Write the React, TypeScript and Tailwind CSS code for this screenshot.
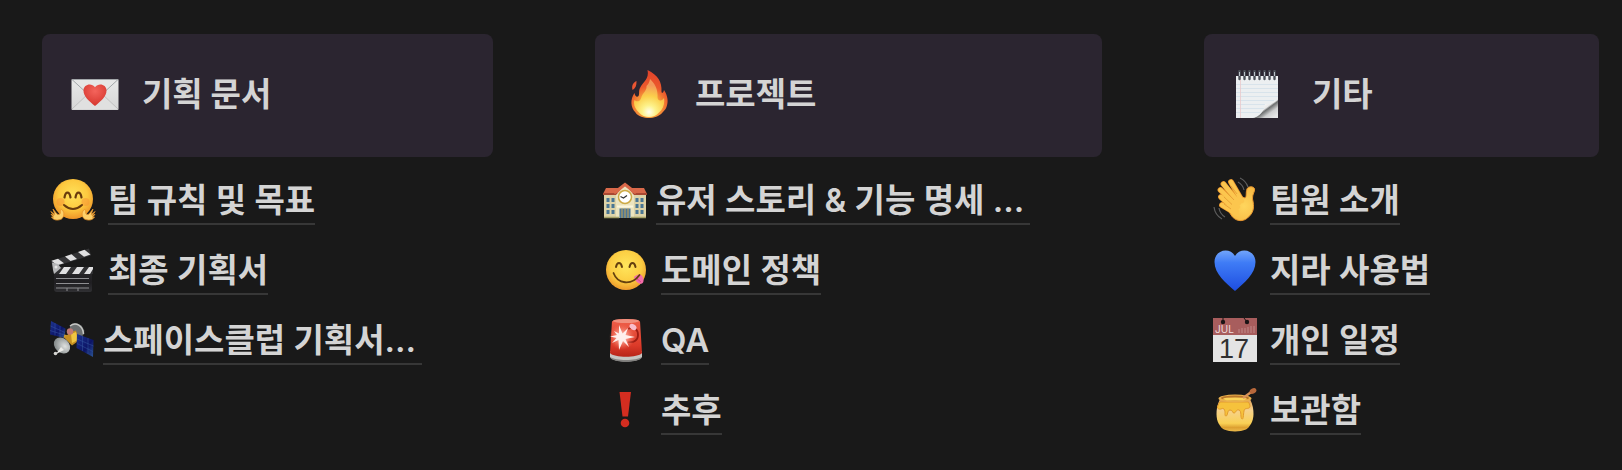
import type { ReactNode } from "react";

type IconProps = { className?: string };
type Item = { label: string; Icon: (p: IconProps) => ReactNode; wide?: boolean };
type Section = {
  title: string;
  Icon: (p: IconProps) => ReactNode;
  indent?: boolean;
  items: Item[];
};

function LoveLetter({ className }: IconProps) {
  return (
    <svg viewBox="0 0 48 48" className={className} aria-hidden="true">
      <defs>
        <linearGradient id="paper" x1="0" y1="0" x2="0" y2="1">
          <stop offset="0" stopColor="#e9e9e9" />
          <stop offset="1" stopColor="#d6d6d6" />
        </linearGradient>
        <radialGradient id="redHeart" cx=".5" cy=".3" r=".7">
          <stop offset="0" stopColor="#f4645c" />
          <stop offset="1" stopColor="#d5352d" />
        </radialGradient>
      </defs>
      <rect x="0.5" y="9" width="47" height="31" rx="1" fill="url(#paper)" />
      <path d="M1 39 18 23h12l17 16" fill="#e0e0e0" stroke="#bdbdbd" strokeWidth=".9" />
      <path d="M1 9.500 20 27q4 3.500 8 0L47 9.500z" fill="#e6e6e6" stroke="#a3a7aa" strokeWidth="1" />
      <path
        d="M24 36C18 31 12.500 26.500 12.500 20.500c0-6 8-8 11.500-3.200 3.500-4.800 11.500-2.800 11.500 3.200C35.500 26.500 30 31 24 36z"
        fill="url(#redHeart)"
      />
    </svg>
  );
}

function Fire({ className }: IconProps) {
  return (
    <svg viewBox="-1 0 48 48" className={className} aria-hidden="true">
      <defs>
        <radialGradient id="flame" gradientUnits="userSpaceOnUse" cx="24" cy="36" r="33">
          <stop offset="0" stopColor="#fbc04a" />
          <stop offset=".35" stopColor="#f59a3a" />
          <stop offset=".6" stopColor="#ec5a2c" />
          <stop offset="1" stopColor="#e2452b" />
        </radialGradient>
        <radialGradient id="flameCore" gradientUnits="userSpaceOnUse" cx="24" cy="42" r="27">
          <stop offset="0" stopColor="#fffef0" />
          <stop offset=".25" stopColor="#fdf28a" />
          <stop offset=".6" stopColor="#fbcf4b" />
          <stop offset="1" stopColor="#f3995a" />
        </radialGradient>
      </defs>
      <path
        d="M22.500 0C33 5 37 12 36.500 21.500c0 2 1.800 2 2.500-1.500 4 6 4.500 12 2.500 17-1 3-3 4-4 5.500C34 46.500 29 48 24 48s-11-1.500-13.500-5.500c-5-5-5.500-13-1-19.500C10 26 12 28 13.500 26c1.500-2.500-.5-5 2-9C18 12 24.500 9 22.500 0z"
        fill="url(#flame)"
      />
      <path
        d="M25 9c5 5 8 10 7.500 18 0 4 3.500 5 6.500 1 1 6-1 11-5 14.500-5 6-15 6-20 0-4-4-6-8-4.500-12.500 2 2 5 2 6.500-1.500C18 22 22 21 21.500 16c2-2 3-4 3.500-7z"
        fill="url(#flameCore)"
      />
      <path d="M11.500 11C7.500 13 6.500 16 7.500 20c3-2 4-4 4-9z" fill="#ea5632" />
    </svg>
  );
}

function Notepad({ className }: IconProps) {
  return (
    <svg viewBox="0 0 48 48" className={className} aria-hidden="true">
      <defs>
        <linearGradient id="curl" x1="0" y1="0" x2="1" y2="1">
          <stop offset=".3" stopColor="#ffffff" />
          <stop offset=".5" stopColor="#e8e8e8" />
          <stop offset=".56" stopColor="#6d6f70" />
          <stop offset=".72" stopColor="#cfd0d1" />
          <stop offset=".9" stopColor="#e6e7e8" />
        </linearGradient>
      </defs>
      <rect x="3" y="6" width="42" height="42" fill="#eceff1" />
      <path d="M3 14.500h42M3 18.500h42M3 22.500h42M3 26.500h42M3 30.500h38M3 34.500h30M3 38.500h28M3 42.500h24" stroke="#d3e0ea" strokeWidth=".8" />
      <path d="M7.500 6v42" stroke="#eac9cb" strokeWidth=".8" />
      <path d="M45 29v19H19c8-1 12-7 13-14 5 1 10-1 13-5z" fill="url(#curl)" />
      <path
        d="M6.500 1v8M11.500 1v8M16.500 1v8M21.500 1v8M26.500 1v8M31.500 1v8M36.500 1v8M41.500 1v8"
        stroke="#4b5058"
        strokeWidth="2.400"
        strokeLinecap="round"
      />
      <path
        d="M6.500 2v4M11.500 2v4M16.500 2v4M21.500 2v4M26.500 2v4M31.500 2v4M36.500 2v4M41.500 2v4"
        stroke="#b9c0c7"
        strokeWidth="1"
      />
    </svg>
  );
}

function HuggingFace({ className }: IconProps) {
  return (
    <svg viewBox="0 0 46 46" className={className} aria-hidden="true">
      <defs>
        <radialGradient id="hugFace" cx=".5" cy=".4" r=".6">
          <stop offset="0" stopColor="#ffe25a" />
          <stop offset=".6" stopColor="#fdc93f" />
          <stop offset="1" stopColor="#ee9428" />
        </radialGradient>
      </defs>
      <circle cx="23" cy="22" r="20" fill="url(#hugFace)" />
      <circle cx="10.500" cy="25" r="4" fill="#f68c35" opacity=".45" />
      <circle cx="35.500" cy="25" r="4" fill="#f68c35" opacity=".45" />
      <path d="M14.500 20.500c1-6.500 5-6.500 6 0M25.500 20.500c1-6.500 5-6.500 6 0" fill="none" stroke="#6a3c0d" strokeWidth="2.200" strokeLinecap="round" />
      <path d="M14 28q9 8 18 0" fill="none" stroke="#6a3c0d" strokeWidth="2" strokeLinecap="round" />
      <path
        d="M11.500 42C6 44.500 2.500 42 1.500 40c1 .5 2 .3 2 .3L1 37.200l3 1.500L.8 34.500l4 3L3 32l4 5c1.500 1 3 .5 3.300-1 .2-2-.3-3.500 1-3.500 3 1 3.700 7 .2 9.500z"
        fill="#fdd06a"
        stroke="#e79328"
        strokeWidth=".8"
      />
      <path
        d="M34.500 42c5.500 2.500 9 0 10-2-1 .5-2 .3-2 .3l2.500-3.100-3 1.500 3.200-4.200-4 3L43 32l-4 5c-1.500 1-3 .5-3.300-1-.2-2 .3-3.500-1-3.500-3 1-3.700 7-.2 9.500z"
        fill="#fdd06a"
        stroke="#e79328"
        strokeWidth=".8"
      />
    </svg>
  );
}

function Clapper({ className }: IconProps) {
  return (
    <svg viewBox="0 0 46 46" className={className} aria-hidden="true">
      <defs>
        <linearGradient id="slate" x1="0" y1="0" x2="0" y2="1">
          <stop offset="0" stopColor="#29292b" />
          <stop offset=".6" stopColor="#1f1e21" />
          <stop offset="1" stopColor="#303033" />
        </linearGradient>
      </defs>
      <path d="M1 14 39 1.500l2 7L3 20z" fill="#333335" />
      <path d="M1.500 13.800 8 11.700l6 4.600-7 2zM15 9.400l6.500-2.200 5.500 4.800-6.500 2zM28 5l6.500-2.200 6 4.700-6.500 2.300z" fill="#e0e0e1" />
      <path d="M4 21h38v22q0 2-2 2H7q-3 0-3-3z" fill="url(#slate)" />
      <rect x="4" y="20" width="39" height="7" fill="#303032" />
      <path d="M14 20h7l-5 7H9zM27 20h7l-5 7h-7zM39 20h4v2l-3 5h-6z" fill="#e0e0e1" />
      <path d="M2 15.500 8 17l3 4-7 6-1-4z" fill="#b6b7b9" />
      <circle cx="6" cy="20" r="1.500" fill="#e5e5e5" />
      <path d="M6 31.500h33M6 36.500h33M6 41h33" stroke="#8e8e91" strokeWidth="1" />
      <path d="M17 41v3M28 41v3" stroke="#8e8e91" strokeWidth="1" />
    </svg>
  );
}

function Satellite({ className }: IconProps) {
  return (
    <svg viewBox="0 -2 46 46" className={className} aria-hidden="true">
      <defs>
        <linearGradient id="panel" x1="0" y1="0" x2="1" y2="1">
          <stop offset="0" stopColor="#1d3590" />
          <stop offset=".6" stopColor="#0c1466" />
          <stop offset="1" stopColor="#2d5796" />
        </linearGradient>
        <radialGradient id="dish" cx=".65" cy=".4" r=".65">
          <stop offset="0" stopColor="#dfe1e0" />
          <stop offset="1" stopColor="#858b8b" />
        </radialGradient>
      </defs>
      <path d="M2 2 16.500 9.500 15.500 19 1 15.500z" fill="url(#panel)" />
      <path d="M6 4v12.500M11 7v11M1.500 7l14.500 6.500M1 11.500l14.500 4.500" stroke="#3a57a4" strokeWidth=".5" />
      <path d="M15 17l13 3" stroke="#c59b35" strokeWidth="3" />
      <ellipse cx="28" cy="11" rx="8" ry="6" transform="rotate(38 28 11)" fill="#6c7071" />
      <path d="M21 7c6-5 13 0 13.500 8" fill="none" stroke="#c5c6c3" strokeWidth="1.500" />
      <path d="m22 13 5-1.500 3 10-7 5-8-8z" fill="#c58f22" />
      <path d="m22 15 5-2 2 8-6 3z" fill="#efc542" />
      <circle cx="21" cy="12.500" r="3.200" fill="#c07a74" />
      <path d="M28 15 44.500 21 44 38 27.500 29z" fill="url(#panel)" />
      <path d="M33.500 17v15M39 19v16M28 20l16.500 7M28 24.500 44 32.500" stroke="#3758a0" strokeWidth=".5" />
      <ellipse cx="13" cy="26.500" rx="9" ry="7" transform="rotate(42 13 26.500)" fill="url(#dish)" />
      <path d="m12 28-5 7 8-4z" fill="#ecece9" />
      <circle cx="6.500" cy="34.500" r="1.800" fill="#d4d4d1" />
    </svg>
  );
}

function School({ className }: IconProps) {
  return (
    <svg viewBox="0 -3 46 46" className={className} aria-hidden="true">
      <path d="M2 13h42v25H2z" fill="#ddd3a9" />
      <path d="M4 8h38l3 6H1z" fill="#d9694a" />
      <path d="M1 13h44v2H1z" fill="#a94832" />
      <path d="M14 15 23 5l9 10v23H14z" fill="#ece4bf" />
      <path d="M12 13 23 4.500 34 13" fill="none" stroke="#d9694a" strokeWidth="3" />
      <path d="M4.500 18h3v4h-3zM9.500 18h3v4h-3zM4.500 24h3v4h-3zM9.500 24h3v4h-3zM4.500 30h3v4h-3zM9.500 30h3v4h-3zM33.500 18h3v4h-3zM38.500 18h3v4h-3zM33.500 24h3v4h-3zM38.500 24h3v4h-3zM33.500 30h3v4h-3zM38.500 30h3v4h-3z" fill="#4a7694" />
      <circle cx="23" cy="17" r="6.500" fill="#fff" stroke="#cdaa45" strokeWidth="1.500" />
      <path d="M25 15.500 21.500 18l-3-1.500" fill="none" stroke="#333" strokeWidth="1.200" />
      <path d="M15 25.500h16v2H15z" fill="#fbf6dd" />
      <path d="M17.500 28.500h11V38h-11z" fill="#4b769a" />
      <path d="M20 28.500V38M23 28.500V38M26 28.500V38" stroke="#c8a24a" strokeWidth="1" />
      <path d="M2 37.500h15M29 37.500h15" stroke="#a3a068" strokeWidth="1.500" />
    </svg>
  );
}

function YumFace({ className }: IconProps) {
  return (
    <svg viewBox="0 0 46 46" className={className} aria-hidden="true">
      <defs>
        <radialGradient id="yumFace" cx=".5" cy=".4" r=".6">
          <stop offset="0" stopColor="#ffe65c" />
          <stop offset=".65" stopColor="#fccd42" />
          <stop offset="1" stopColor="#ed9a2b" />
        </radialGradient>
      </defs>
      <circle cx="23" cy="23" r="20" fill="url(#yumFace)" />
      <path d="M13 20c1-5.500 5-5.500 6 0M26.500 20c1-5.500 5-5.500 6 0" fill="none" stroke="#65400f" strokeWidth="2" strokeLinecap="round" />
      <path d="M31 30c2-2 5-3 7-2s4 7 1 8.500-7-2.500-8-6.500z" fill="#f46daa" />
      <path d="m33 31 5 4" stroke="#cf3c82" strokeWidth=".8" />
      <path d="M10.500 26c4 11 18 13 26 2" fill="none" stroke="#65400f" strokeWidth="1.800" strokeLinecap="round" />
    </svg>
  );
}

function Siren({ className }: IconProps) {
  return (
    <svg viewBox="0 0 46 46" className={className} aria-hidden="true">
      <defs>
        <linearGradient id="sirenBody" x1="0" y1="0" x2="0" y2="1">
          <stop offset="0" stopColor="#ef614b" />
          <stop offset=".7" stopColor="#dc3a29" />
          <stop offset="1" stopColor="#b72418" />
        </linearGradient>
        <radialGradient id="glow">
          <stop offset="0" stopColor="#fff" />
          <stop offset=".3" stopColor="#ffc3b6" stopOpacity=".8" />
          <stop offset="1" stopColor="#f67157" stopOpacity="0" />
        </radialGradient>
      </defs>
      <path d="M7 34h32v6c-3 6-29 6-32 0z" fill="#c6c5c2" />
      <path d="M7.500 40c4 4 27 4 31 0v1c-4 5-27 5-31 0z" fill="#82817f" />
      <path d="M9 4.500c2-3.500 26-3.500 28 0l2 31.500c-4 5-28 5-32 0z" fill="url(#sirenBody)" />
      <ellipse cx="23" cy="4" rx="13" ry="2" fill="#f0907e" />
      <path d="M25 12c7-3 10 1 10 6s-4 8-10 7" fill="none" stroke="#9d1c13" strokeWidth="1.800" />
      <ellipse cx="30" cy="10" rx="3.800" ry="2.600" transform="rotate(35 30 10)" fill="#f9bdcb" />
      <circle cx="19" cy="20" r="13" fill="url(#glow)" />
      <path d="m16 8 3.500 8.500L25 11l-2.500 7L32 20l-9.500 2L26 30l-6-6-4 9-.500-10L9 26l4.500-5L7 19.500l7-1.500-3-4 5 2.500z" fill="#fff0ec" />
    </svg>
  );
}

function Exclamation({ className }: IconProps) {
  return (
    <svg viewBox="0 0 46 46" className={className} aria-hidden="true">
      <path d="M16.500 5H28l-3 24.500h-5.500z" fill="#d32d20" />
      <circle cx="22" cy="36" r="4.300" fill="#d32d20" />
    </svg>
  );
}

function Wave({ className }: IconProps) {
  return (
    <svg viewBox="0 0 46 46" className={className} aria-hidden="true">
      <defs>
        <radialGradient id="hand" gradientUnits="userSpaceOnUse" cx="32" cy="29" r="25">
          <stop offset="0" stopColor="#ffd65d" />
          <stop offset="1" stopColor="#f5b23c" />
        </radialGradient>
      </defs>
      <g fill="none" stroke="#e8962f" strokeWidth="5.800" strokeLinecap="round">
        <path d="M30 24 19 5M27 26 11.500 7M26 30 8.500 13M25 34 9 20M25 37 10 28" />
      </g>
      <path
        d="M27 19 33 21c2-1 .5-5 2-9 1-3 7-3 7.500 0 .5 3-2 4-2 10 2 8 1 13-3 17-5 6-12 6-17 1L13 29z"
        fill="url(#hand)"
        stroke="#e8962f"
        strokeWidth="1"
      />
      <g fill="none" stroke="#fcc64e" strokeWidth="4.400" strokeLinecap="round">
        <path d="M30 24 19 5M27 26 11.500 7M26 30 8.500 13M25 34 9 20M25 37 10 28" />
      </g>
      <g fill="none" stroke="#e39a33" strokeWidth=".8">
        <path d="m25 17-6-8M22 23l-9-9.500M20 27.500 12 20M19 32l-7-5" />
      </g>
      <path d="M26 5q5 3 6 8M28 1q6 3 8 9M7 31q1 6 6 9M2 30q1 8 8 12" fill="none" stroke="#5e5e5e" strokeWidth="1.200" />
    </svg>
  );
}

function BlueHeart({ className }: IconProps) {
  return (
    <svg viewBox="0 0 46 46" className={className} aria-hidden="true">
      <defs>
        <linearGradient id="blue" x1="0" y1="0" x2="0" y2="1">
          <stop offset="0" stopColor="#72a5fa" />
          <stop offset=".3" stopColor="#3f7cf6" />
          <stop offset="1" stopColor="#1d4de0" />
        </linearGradient>
      </defs>
      <path
        d="M23 44C14 36 2.500 27 2.500 15 2.500 3 17.500-.5 23 9c5.500-9.500 20.500-6 20.500 6C43.500 27 32 36 23 44z"
        fill="url(#blue)"
      />
    </svg>
  );
}

function Calendar({ className }: IconProps) {
  return (
    <svg viewBox="0 0 46 46" className={className} aria-hidden="true">
      <rect x="1" y="1" width="44" height="44" fill="#e4e4e4" />
      <path d="M1 1h44v17H1z" fill="#a85d5d" />
      <circle cx="11" cy="5" r="2.200" fill="#1b1415" />
      <circle cx="35" cy="5" r="2.200" fill="#1b1415" />
      <path d="M11 5V1M35 5l-3-4" stroke="#1b1415" strokeWidth="1" />
      <path d="M27 12v4M30 11v5M33 11v5M36 10v6M39 9v7M42 9v7" stroke="#c18a8a" strokeWidth="1" />
      <text x="3" y="16" fontSize="10" fill="#f0dfdf" fontFamily="Inter, sans-serif">JUL</text>
      <text x="22" y="41" fontSize="27" textAnchor="middle" fill="#303030" fontFamily="Liberation Sans, sans-serif">17</text>
    </svg>
  );
}

function HoneyPot({ className }: IconProps) {
  return (
    <svg viewBox="0 0 46 46" className={className} aria-hidden="true">
      <defs>
        <linearGradient id="pot" x1="0" y1="0" x2="0" y2="1">
          <stop offset="0" stopColor="#e0a057" />
          <stop offset=".35" stopColor="#f6d28c" />
          <stop offset=".75" stopColor="#f9d055" />
          <stop offset=".88" stopColor="#dda031" />
          <stop offset="1" stopColor="#eab94a" />
        </linearGradient>
      </defs>
      <path d="M8 12h30c3 6 3.500 11 3.500 15 0 8-4 13-7.500 15.500-6 2.500-16 2.500-22 0C8 40 4.500 35 4.500 27c0-4 .5-9 3.500-15z" fill="url(#pot)" />
      <path
        d="M8 15c-1.500 2-2.500 4-2.500 6 3 3 4.500-1 6.500 1 2 3 0 7 2 7s1-6 4-6 2 3 4 3 2-4 5-3 1 8 3 9 1-9 3-10 5 0 5-3c0-1-1-3-1.500-4z"
        fill="#f6c23c"
        stroke="#e39b2c"
        strokeWidth="1"
      />
      <ellipse cx="23" cy="11.500" rx="16.500" ry="4" fill="#eab04d" />
      <ellipse cx="23" cy="11" rx="14" ry="2.400" fill="#b9762a" />
      <ellipse cx="23" cy="12" rx="12" ry="1.600" fill="#fbd45a" />
      <path d="m31 11 9-6.500" stroke="#d8935a" strokeWidth="2.400" />
      <ellipse cx="41" cy="4" rx="3.600" ry="2.600" transform="rotate(-30 41 4)" fill="#b8683b" />
    </svg>
  );
}

const sections: Section[] = [
  {
    title: "기획 문서",
    Icon: LoveLetter,
    items: [
      { label: "팀 규칙 및 목표", Icon: HuggingFace },
      { label: "최종 기획서", Icon: Clapper },
      { label: "스페이스클럽 기획서...", Icon: Satellite, wide: true },
    ],
  },
  {
    title: "프로젝트",
    Icon: Fire,
    items: [
      { label: "유저 스토리 & 기능 명세 ...", Icon: School, wide: true },
      { label: "도메인 정책", Icon: YumFace },
      { label: "QA", Icon: Siren },
      { label: "추후", Icon: Exclamation },
    ],
  },
  {
    title: "기타",
    Icon: Notepad,
    indent: true,
    items: [
      { label: "팀원 소개", Icon: Wave },
      { label: "지라 사용법", Icon: BlueHeart },
      { label: "개인 일정", Icon: Calendar },
      { label: "보관함", Icon: HoneyPot },
    ],
  },
];

export default function App() {
  return (
    <main className="min-h-screen bg-[#191919] pt-[34px] pr-[23px] pb-4 pl-[42px] font-['Inter','Noto_Sans_CJK_KR',sans-serif] text-[33px] text-[#d4d4d4]">
      <div className="grid grid-cols-[451fr_507fr_395fr] gap-x-[102px]">
        {sections.map((section) => (
          <SectionColumn key={section.title} section={section} />
        ))}
      </div>
    </main>
  );
}

function SectionColumn({ section }: { section: Section }) {
  const { title, Icon, indent, items } = section;

  return (
    <section className="min-w-0">
      <div className="flex h-[123px] items-center gap-[22px] rounded-lg bg-[#2b2530] pb-1 pl-7">
        <Icon className="h-12 w-[50px] shrink-0" />
        <h2 className={`font-bold leading-[48px] whitespace-nowrap ${indent ? "pl-2" : ""}`}>
          {title}
        </h2>
      </div>
      <ul className="mt-2">
        {items.map((item) => (
          <ListItem key={item.label} item={item} />
        ))}
      </ul>
    </section>
  );
}

function ListItem({ item }: { item: Item }) {
  const { label, Icon, wide } = item;

  return (
    <li className={`flex h-[70px] items-center ${wide ? "gap-2 pl-[7px]" : "gap-3 pl-2"}`}>
      <Icon className="h-[46px] w-[46px] shrink-0" />
      <a
        href="#"
        className={`border-b-2 border-[#373737] pt-0.5 font-semibold leading-[46px] whitespace-nowrap ${wide ? "pr-1.5" : ""}`}
      >
        {label}
      </a>
    </li>
  );
}
